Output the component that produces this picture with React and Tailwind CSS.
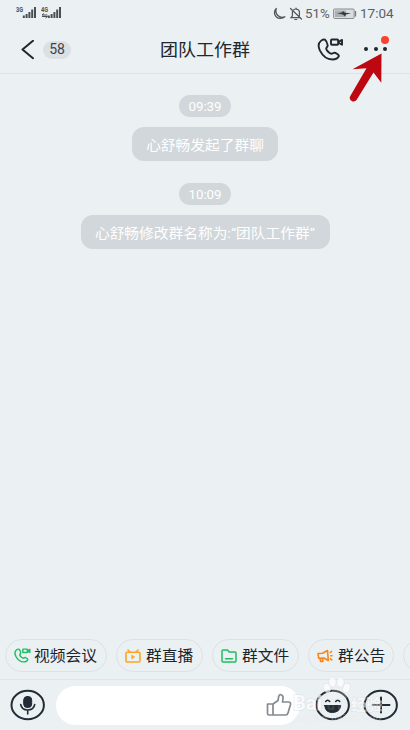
const MESSAGES = [
    { time: '09:39', text: '心舒畅发起了群聊', width: 'w-[146px]' },
    { time: '10:09', text: '心舒畅修改群名称为:“团队工作群”', width: 'w-[249px]' },
]

const SIGNAL_HEIGHTS = [2.5, 4, 6, 8.5, 11]

const Signal = ({ label, sub }) => (
    <svg width="22" height="16" viewBox="0 0 22 16" fill="#4a4f54">
        <text x="0" y="6" fontSize="7" fontWeight="700" textLength="7" lengthAdjust="spacingAndGlyphs">{label}</text>
        {sub && <path d="M1 9h5.500M1 9l2-1.500M1 10.500h5.500l-2 1.500" stroke="#4a4f54" strokeWidth="1" fill="none" />}
        {SIGNAL_HEIGHTS.map((h, i) => (
            <rect key={h} x={6.8 + i * 2.8} y={12 - h} width="2" height={h} />
        ))}
    </svg>
)

const StatusBar = () => (
    <div className="flex h-[27px] shrink-0 items-center justify-between pl-4 pr-[15px] text-[#5b6064]">
        <div className="flex gap-[3px] pt-px">
            <Signal label="3G" />
            <Signal label="4G" sub />
        </div>
        <div className="flex items-center">
            <svg width="14" height="14" viewBox="0 0 14 14" fill="none" stroke="#50565b" strokeWidth="1.300" strokeLinejoin="round">
                <path d="M4.300 1.500A5.600 5.300 0 1 0 12.800 9.800A6.500 6.500 0 0 1 4.300 1.500z" />
            </svg>
            <svg className="ml-[3px]" width="14" height="14" viewBox="0 0 14 14" fill="none" stroke="#50565b" strokeWidth="1.200" strokeLinecap="round">
                <path d="M1.500 1.500l11 10.500M3.400 4.500v4.500L2 10.700h8.500M4.700 2.700C6 1.700 9 1.500 10.400 4.300v4.400M7 1v1M5.800 12.500h2" />
            </svg>
            <span className="ml-[2px] w-[25px] whitespace-nowrap text-[13.3px] leading-4">51%</span>
            <svg className="ml-[3px]" width="24" height="12" viewBox="0 0 24 12">
                <rect x="0.600" y="1" width="20.500" height="9.500" rx="1" fill="#d9dde0" stroke="#888d91" strokeWidth="1" />
                <rect x="2" y="2.500" width="11" height="6.500" fill="#aaafb2" />
                <path d="M4 5.200l5-.6 1-1.600 2 1.700 6 .6-5 1.200-1 1.700-2.200-1.800z" fill="#34393d" />
                <path d="M22.500 3v5.500" stroke="#777c80" strokeWidth="1.300" />
            </svg>
            <span className="mb-px ml-[3px] w-[35px] whitespace-nowrap text-[13.5px] leading-4">17:04</span>
        </div>
    </div>
)

const PhoneVideo = ({ className, strokeWidth = 2 }) => (
    <svg className={className} viewBox="0 0 28 24" fill="none" stroke="currentColor" strokeWidth={strokeWidth} strokeLinejoin="round" strokeLinecap="round">
        <path d="M4 3C1.500 5 1 9 3 13.200C6 19 11 22.500 16 22.500C19 22.500 21.800 21 22.700 19C23 17.500 22 16.800 19 15.500C17.400 14.900 16.700 16 15.600 16.400C13.300 16.700 9.800 13 9.500 11C9.800 9.600 11.300 9 11 7.400C10.500 4.600 9.400 2.700 8.300 1.800C7 1.200 5.500 1.600 4 3z" />
        <rect x="14.500" y="1.500" width="7.500" height="5.600" rx="1" />
        <path d="M22.500 4l3.500-2v5l-3.500-2" />
    </svg>
)

const Header = () => (
    <header className="relative flex h-[47px] shrink-0 items-center border-b border-[#dde2e5] text-[#20272e]">
        <svg className="ml-[21px]" width="14" height="20" viewBox="0 0 14 20" fill="none" stroke="currentColor" strokeWidth="2" strokeLinecap="round" strokeLinejoin="round">
            <path d="M12 0.800L1.500 9.500L12 18.200" />
        </svg>
        <div className="mb-px ml-[8px] flex h-[18px] w-[28px] items-center justify-center rounded-full bg-[#dbe0e4] text-[14px] text-[#3c444b]">58</div>
        <h1 className="ml-[89px] w-[92px] whitespace-nowrap text-[18px] leading-6"><span className="inline-block scale-y-95">团队工作群</span></h1>
        <PhoneVideo className="mb-px ml-[65px] h-[23px] w-[27px]" />
        <div className="relative mb-[2px] ml-[20px] flex gap-[5.5px]">
            <span className="size-1 rounded-full bg-[#20272e]" />
            <span className="size-1 rounded-full bg-[#20272e]" />
            <span className="size-1 rounded-full bg-[#20272e]" />
            <span className="absolute -top-[11px] left-[17px] size-2 rounded-full bg-[#fb4130]" />
        </div>
        {/* Pointer arrow over the menu */}
        <svg className="absolute left-[348px] top-[25px]" width="38" height="52" viewBox="0 0 38 52">
            <path d="M33.500 1.500L4.500 17.300L18.500 16.200L2 44.500C0.500 48.500 6 51.500 8.700 47.800L25.500 20.500L33.300 30.700z" fill="#bd0711" />
        </svg>
    </header>
)

const VideoIcon = () => <PhoneVideo className="h-[15px] w-[17px] text-[#20bd63]" strokeWidth={2.4} />

const LiveIcon = () => (
    <svg width="16" height="14" viewBox="0 0 16 14" fill="none" stroke="#fba525" strokeWidth="1.600" strokeLinejoin="round" strokeLinecap="round">
        <path d="M3 1l2 2M13 1l-2 2" />
        <rect x="1" y="3.200" width="14" height="9.800" rx="1" />
        <path d="M6.700 6.300v3.600l3-1.800z" fill="#fba525" strokeWidth=".5" />
    </svg>
)

const FileIcon = () => (
    <svg width="16" height="14" viewBox="0 0 16 14" fill="none" stroke="#20bd63" strokeWidth="1.500" strokeLinejoin="round" strokeLinecap="round">
        <path d="M1 2q0-1 1-1h4.500l1.700 2H14q1 0 1 1v8q0 1-1 1H2q-1 0-1-1zM4.500 9.800h7" />
    </svg>
)

const NoticeIcon = () => (
    <svg width="16" height="14" viewBox="0 0 16 14" fill="none" stroke="#f98518" strokeWidth="1.600" strokeLinejoin="round" strokeLinecap="round">
        <path d="M1 4.500L5.500 4.300L10.500 1.500L11.300 11.500L7 9L1.700 9.300zM3 9.500l.6 3h2.300l-.5-3M13.300 3.500l1.200-1M13.700 6.800H15M13.500 9.800l1.300 1" />
    </svg>
)

const ACTIONS = [
    { label: '视频会议', Icon: VideoIcon, width: 'w-[102px]', space: 'ml-[3px]' },
    { label: '群直播', Icon: LiveIcon, width: 'w-[87px]', space: 'ml-[5px]' },
    { label: '群文件', Icon: FileIcon, width: 'w-[87px]', space: 'ml-[5px]' },
    { label: '群公告', Icon: NoticeIcon, width: 'w-[86px]', space: 'ml-[5px]' },
]

// Round buttons of the bottom bar, slightly wider than tall
const RoundIcon = ({ children }) => (
    <svg className="shrink-0" width="36" height="32" viewBox="0 0 36 32" fill="none" stroke="#232c34" strokeWidth="2" strokeLinecap="round" strokeLinejoin="round">
        <ellipse cx="17.700" cy="16" rx="16.200" ry="14.300" />
        {children}
    </svg>
)

const Watermark = () => (
    <svg className="absolute left-[292px] top-[-4px] opacity-70" width="100" height="54" viewBox="0 0 100 54" fill="#fff" stroke="#d3d9dc" strokeWidth="1" paintOrder="stroke">
        <ellipse cx="35" cy="12" rx="3.300" ry="4.500" transform="rotate(-15 35 12)" />
        <ellipse cx="40.500" cy="6" rx="3.300" ry="4.800" />
        <ellipse cx="48.500" cy="6" rx="3.300" ry="4.800" />
        <ellipse cx="54.500" cy="12" rx="3.300" ry="4.500" transform="rotate(20 54.500 12)" />
        <path opacity=".3" d="M45 12C41 12 40 16 37 18C34 21 36 24 41 23.500H49C55 24 56 21 53 18C50 16 49 12 45 12z" />
        <text x="1" y="34" fontSize="20" fontWeight="700" textLength="29" lengthAdjust="spacingAndGlyphs">Bai</text>
        <text x="35" y="34" fontSize="14" fontWeight="700" textLength="18" stroke="none" opacity=".15">du</text>
        <text x="59" y="34" fontSize="15" fontWeight="700" textLength="31" lengthAdjust="spacingAndGlyphs" opacity=".75">经验</text>
        <text x="1" y="45" fontSize="9" strokeWidth=".6" textLength="88" opacity=".35">jingyan.baidu.com</text>
    </svg>
)

export default function App() {
    return (
        <div className="flex h-[730px] w-[410px] flex-col overflow-hidden bg-[#ebf0f3] font-[Roboto,'Noto_Sans_CJK_SC',sans-serif]">
            <StatusBar />
            <Header />

            {/* Messages */}
            <main className="flex grow flex-col items-center pt-[21px]">
                {MESSAGES.map(m => (
                    <div key={m.time} className="mb-[22px] flex flex-col items-center gap-[10px] text-white">
                        <div className="flex h-[22px] w-[52px] items-center justify-center rounded-full bg-[#d1d7da] pt-px text-[13.3px]">{m.time}</div>
                        <div className={`flex h-[34px] items-center justify-center rounded-[12px] bg-[#d1d7da] pt-[2px] ${m.width}`}>
                            <span className="scale-x-[1.09] whitespace-nowrap text-[13.5px]">{m.text}</span>
                        </div>
                    </div>
                ))}
            </main>

            {/* Quick actions */}
            <div className="flex h-[41px] shrink-0 gap-[9px] overflow-hidden border-b border-[#dfe4e6] pl-[5px]">
                {ACTIONS.map(({ label, Icon, width, space }) => (
                    <button key={label} className={`flex h-[33px] shrink-0 items-center rounded-full border border-[#dce1e4] pl-[8px] ${width}`}>
                        <Icon />
                        <span className={`mt-[2px] origin-left scale-x-[1.05] whitespace-nowrap text-[15px] text-[#1d242a] ${space}`}>{label}</span>
                    </button>
                ))}
                <div className="h-[33px] w-[87px] shrink-0 rounded-full border border-[#dce1e4]" />
            </div>

            {/* Input bar */}
            <footer className="relative flex h-[50px] shrink-0 items-center pl-[10px]">
                <RoundIcon>
                    <rect x="13.700" y="7.500" width="8" height="11" rx="3.500" fill="#232c34" strokeWidth="1" />
                    <path d="M10.700 15.500Q11.700 21 17.700 21T24.700 15.500M17.700 21v4" strokeWidth="1.600" />
                </RoundIcon>
                <div className="ml-[10px] flex h-[39px] w-[244px] items-center justify-end rounded-full bg-white pr-[8px]">
                    <svg width="26" height="24" viewBox="0 0 26 24" fill="none" stroke="#858b90" strokeWidth="1.700" strokeLinejoin="round" strokeLinecap="round">
                        <path d="M1.500 11h5.500v11H3q-1.500 0-1.500-1.500zM7 11l5-3.500L12.800 3Q13.500 1 15.500 2T17 5.500L16.500 9H23Q25 9.500 24.500 11.500L22 20Q21.500 22 19.500 22H7" />
                    </svg>
                </div>
                <div className="ml-[15px] flex gap-[12px]">
                    <RoundIcon>
                        <path d="M9.700 16.500h16Q25 23 17.700 23.500T9.700 16.500z" fill="#232c34" strokeWidth="1" />
                        <path d="M10.700 12.500q2-2.500 4 0M20.700 12.500q2-2.500 4 0" strokeWidth="1.600" />
                    </RoundIcon>
                    <RoundIcon>
                        <path d="M9.500 16h17M18 8.500v15" />
                    </RoundIcon>
                </div>
                <Watermark />
            </footer>
        </div>
    )
}
